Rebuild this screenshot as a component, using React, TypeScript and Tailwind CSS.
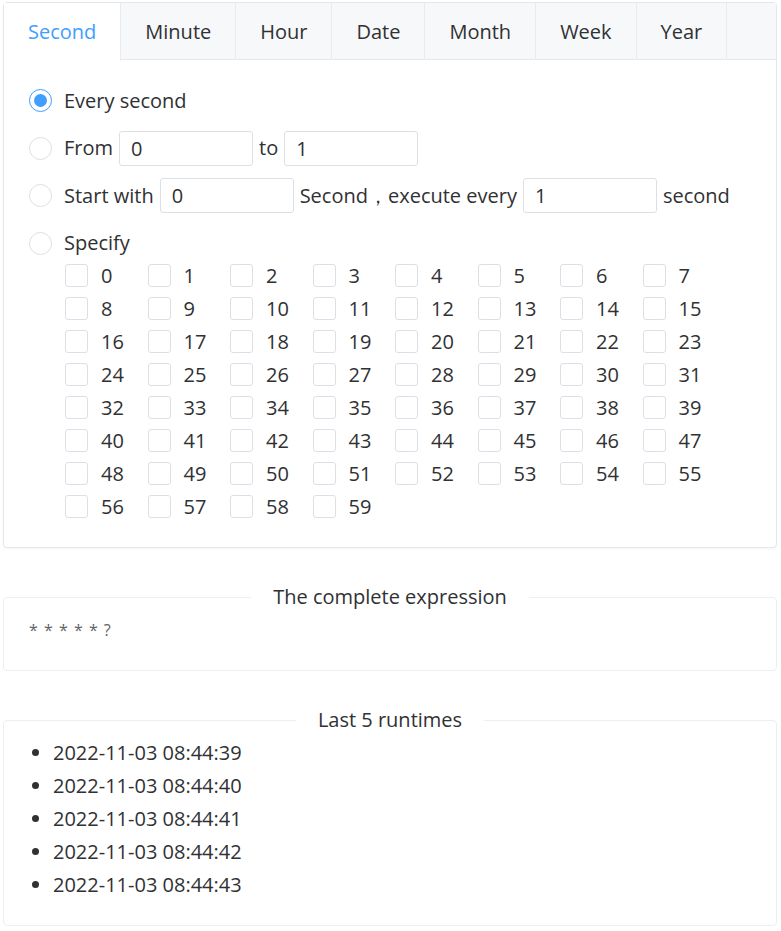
import { useState } from 'react'

const tabs = ['Second', 'Minute', 'Hour', 'Date', 'Month', 'Week', 'Year']
const runtimes = [
  '2022-11-03 08:44:39',
  '2022-11-03 08:44:40',
  '2022-11-03 08:44:41',
  '2022-11-03 08:44:42',
  '2022-11-03 08:44:43',
]

function Radio({ checked, onClick, children }: { checked: boolean; onClick: () => void; children: React.ReactNode }) {
  return (
    <div className="mb-[12.5px] flex h-[35px] items-center" onClick={onClick}>
      <span
        className={
          'mr-[12px] flex h-[23px] w-[23px] shrink-0 items-center justify-center rounded-full border bg-white ' +
          (checked ? 'border-[#409eff]' : 'border-[#dcdfe6]')
        }
      >
        {checked && <span className="h-[13px] w-[13px] rounded-full bg-[#409eff]" />}
      </span>
      {children}
    </div>
  )
}

function Field({ value }: { value: string }) {
  return (
    <input
      defaultValue={value}
      className="mx-[6px] h-[35px] w-[134px] rounded-[3px] border border-[#dcdfe6] px-[11px] text-[#303133] outline-none"
    />
  )
}

export default function App() {
  const [tab, setTab] = useState('Second')
  const [mode, setMode] = useState(0)
  const [picked, setPicked] = useState<number[]>([])

  const toggle = (n: number) =>
    setPicked((prev) => (prev.includes(n) ? prev.filter((x) => x !== n) : [...prev, n]))

  return (
    <div
      className="w-[781px] bg-white pl-[3px] pr-[4px] pt-[2px] text-[20px] text-[#303133]"
      style={{ fontFamily: '"Open Sans", "Noto Sans", sans-serif' }}
    >
      {/* tab card */}
      <div className="rounded-[4px] border border-[#e4e7ed] bg-white shadow-[0_1px_3px_rgba(0,0,0,0.04)]">
        <div className="flex h-[57px] border-b border-[#e4e7ed] bg-[#f7f8fa]">
          {tabs.map((t) => {
            const active = t === tab
            return (
              <button
                key={t}
                type="button"
                onClick={() => setTab(t)}
                className={
                  'h-[57px] border-r border-[#e9ebef] px-[24px] ' +
                  (active ? '-mb-px h-[58px] bg-white text-[#409eff]' : 'text-[#303133]')
                }
              >
                {t}
              </button>
            )
          })}
        </div>

        <div className="px-[25px] pb-[24px] pt-[23px]">
          <Radio checked={mode === 0} onClick={() => setMode(0)}>
            <span>Every second</span>
          </Radio>
          <Radio checked={mode === 1} onClick={() => setMode(1)}>
            <span>From</span>
            <Field value="0" />
            <span>to</span>
            <Field value="1" />
          </Radio>
          <Radio checked={mode === 2} onClick={() => setMode(2)}>
            <span>Start with</span>
            <Field value="0" />
            <span>Second，execute every</span>
            <Field value="1" />
            <span>second</span>
          </Radio>
          <Radio checked={mode === 3} onClick={() => setMode(3)}>
            <span>Specify</span>
          </Radio>

          <div className="-mt-[14px] ml-[36px] grid grid-cols-[repeat(8,82.5px)]">
            {Array.from({ length: 60 }, (_, n) => (
              <label key={n} className="flex h-[33px] items-center" onClick={() => toggle(n)}>
                <span
                  className={
                    'mr-[13px] h-[23px] w-[23px] rounded-[3px] border ' +
                    (picked.includes(n) ? 'border-[#409eff] bg-[#409eff]' : 'border-[#dcdfe6] bg-white')
                  }
                />
                {n}
              </label>
            ))}
          </div>
        </div>
      </div>

      <fieldset className="mt-[37px] rounded-[4px] border border-[#ebeef5] px-[25px] pb-[28px]">
        <legend className="mx-auto px-[22px] leading-[24px]">The complete expression</legend>
        <div className="pt-[9px] text-[16px] leading-[24px] tracking-[1px] text-[#606266]">* * * * * ?</div>
      </fieldset>

      <fieldset className="mt-[37px] rounded-[4px] border border-[#ebeef5] pb-[24px]">
        <legend className="mx-auto px-[22px] leading-[24px]">Last 5 runtimes</legend>
        <ul className="list-disc pl-[49px] pt-[4px]">
          {runtimes.map((r) => (
            <li key={r} className="leading-[33px]">
              {r}
            </li>
          ))}
        </ul>
      </fieldset>
    </div>
  )
}
